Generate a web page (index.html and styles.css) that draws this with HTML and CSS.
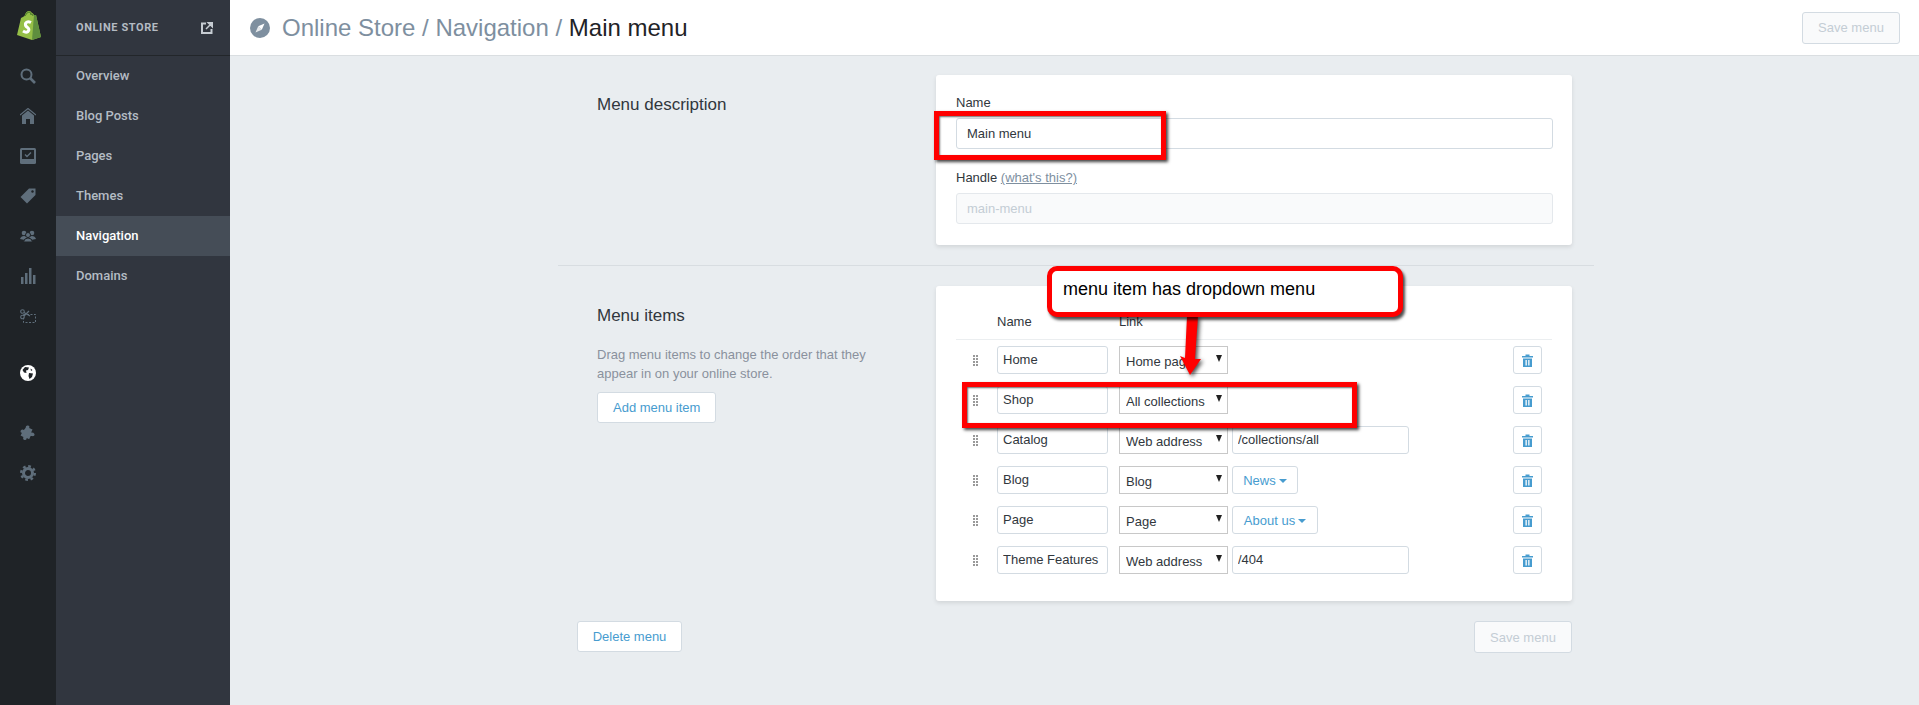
FILE: index.html
```html
<!DOCTYPE html>
<html>
    <head>
        <meta charset="UTF-8">
        <link rel="stylesheet" href="styles.css">
        <title>Main menu</title>
    </head>
    <body>
        <div class="rail">
            <div class="rail-logo">
                <svg width="26" height="30" viewBox="0 0 26 30">
                    <path d="M2 25 L6 8 Q8 7 9.5 6 Q11 1 14 1 Q16 1 17 3 Q18 3 19 5 L21 5 L26 27 L17 30 Z" fill="#95bf47"/>
                    <path d="M19 5 L21 5 L26 27 L17 30 Z" fill="#5e8e3e"/>
                    <path d="M10 6 Q12 2 14 2 Q16 2 16 5 M16 4 Q18 4 18 6" fill="none" stroke="#4a7a2a" stroke-width="1"/>
                    <path d="M16 12.5 Q12 10.500 10.500 13.500 Q10 16 12.500 17.500 Q15 19.500 13 21.500 Q11 23 8 21" fill="none" stroke="#fff" stroke-width="3"/>
                </svg>
            </div>
            <div class="rail-icon">
                <svg width="16" height="16" viewBox="0 0 16 16"><circle cx="6.500" cy="6.500" r="5" fill="none" stroke="#5f6e7b" stroke-width="2"/><path d="M10 10 L15 15" stroke="#5f6e7b" stroke-width="2.600"/></svg>
            </div>
            <div class="rail-icon">
                <svg width="16" height="16" viewBox="0 0 16 16"><path d="M0 7 L8 0.500 L16 7" fill="none" stroke="#5f6e7b" stroke-width="1.200"/><path d="M8 2.500 L14 7.500 V16 H10 V11 H6 V16 H2 V7.500 Z" fill="#5f6e7b"/></svg>
            </div>
            <div class="rail-icon">
                <svg width="16" height="16" viewBox="0 0 16 16"><rect width="16" height="16" rx="1.500" fill="#5f6e7b"/><rect x="2" y="2" width="12" height="9" fill="#1f2327"/><path d="M5 6.500 L7 8.500 L11 4.500" fill="none" stroke="#5f6e7b" stroke-width="1.400"/></svg>
            </div>
            <div class="rail-icon">
                <svg width="16" height="16" viewBox="0 0 16 16"><path d="M9 0.500 H15.500 V7 L7 15.500 L0.500 9 Z" fill="#5f6e7b"/><circle cx="12.500" cy="3.500" r="1.200" fill="#1f2327"/></svg>
            </div>
            <div class="rail-icon">
                <svg width="16" height="16" viewBox="0 0 16 16"><circle cx="4" cy="5" r="2.300" fill="#5f6e7b"/><circle cx="12" cy="5" r="2.300" fill="#5f6e7b"/><path d="M0 11 Q1 8 4 8 Q7 8 8 11 Q9 8 12 8 Q15 8 16 11 L11 12 H5 Z" fill="#5f6e7b"/><circle cx="8" cy="7" r="2.500" fill="#5f6e7b" stroke="#1f2327"/><path d="M3.500 14 Q4 10 8 10 Q12 10 12.500 14 Z" fill="#5f6e7b" stroke="#1f2327"/></svg>
            </div>
            <div class="rail-icon">
                <svg width="16" height="16" viewBox="0 0 16 16"><path d="M1 9 H3.500 V16 H1 Z M5 5 H7.500 V16 H5 Z M9 0 H11.500 V16 H9 Z M13 7 H15.500 V16 H13 Z" fill="#5f6e7b"/></svg>
            </div>
            <div class="rail-icon">
                <svg width="16" height="14" viewBox="0 0 16 14"><circle cx="2.500" cy="2.500" r="1.800" fill="none" stroke="#5f6e7b" stroke-width="1.100"/><circle cx="2.500" cy="8" r="1.800" fill="none" stroke="#5f6e7b" stroke-width="1.100"/><path d="M4 3.500 L10 7 M4 7 L9 2" stroke="#5f6e7b" stroke-width="1.200"/><rect x="3.500" y="5.500" width="12" height="8" fill="none" stroke="#5f6e7b" stroke-dasharray="2 1.500"/></svg>
            </div>
            <div class="rail-icon rail-gap">
                <svg width="16" height="16" viewBox="0 0 16 16"><circle cx="8" cy="8" r="8" fill="#fff"/><path d="M5 2 L9 2.500 L8 5 L6 5.500 L6.500 8 L4 7.500 L2.500 5 Z M9 8 L13 8.500 L12 12 L9.500 14 L8.500 11 Z M10.500 3.500 L12.500 5 L11 6 Z" fill="#1f2327"/></svg>
            </div>
            <div class="rail-icon rail-gap-small">
                <svg width="16" height="16" viewBox="0 0 16 16"><path d="M5 3 Q4.500 0.500 7 0.500 Q9 0.500 8.500 3 L12 4 L11 7 Q13.500 6.500 14.500 8 Q15.500 10.500 12.500 10.500 L11 10.500 L10 14 L7.500 13 Q7.500 15.500 5.500 15.500 Q3.500 15.500 4 12.500 L1 11.500 L2 8.500 Q0 9 0.500 6.500 Q1.500 5 3.500 5.500 Z" fill="#5f6e7b" transform="rotate(8 8 8)"/></svg>
            </div>
            <div class="rail-icon">
                <svg width="16" height="16" viewBox="0 0 16 16"><circle cx="8" cy="8" r="4.500" fill="none" stroke="#5f6e7b" stroke-width="3"/><circle cx="8" cy="8" r="6.800" fill="none" stroke="#5f6e7b" stroke-width="2.400" stroke-dasharray="2.700 2.640"/></svg>
            </div>
        </div>

        <div class="nav">
            <div class="nav-head">
                <span>ONLINE STORE</span>
                <svg width="12" height="12" viewBox="0 0 12 12"><path d="M5 1.500 H1 V11 H10.500 V7" fill="none" stroke="#c6ccd2" stroke-width="2"/><path d="M7 0.500 H11.500 V5 Z M9.500 2.500 L5 7" fill="#c6ccd2" stroke="#c6ccd2" stroke-width="1.500"/></svg>
            </div>
            <a class="nav-item">Overview</a>
            <a class="nav-item">Blog Posts</a>
            <a class="nav-item">Pages</a>
            <a class="nav-item">Themes</a>
            <a class="nav-item active">Navigation</a>
            <a class="nav-item">Domains</a>
        </div>

        <div class="main">
            <div class="topbar">
                <svg width="20" height="20" viewBox="0 0 20 20"><circle cx="10" cy="10" r="10" fill="#7e8f9f"/><path d="M14.500 5.500 L11.800 11.800 L8.200 8.200 Z" fill="#fff"/><path d="M5.500 14.500 L8.200 8.200 L11.800 11.800 Z" fill="#fff" opacity=".8"/></svg>
                <h1 class="crumbs">Online Store / Navigation / <span>Main menu</span></h1>
                <button class="btn btn-disabled top-save">Save menu</button>
            </div>

            <div class="content">
                <div class="section">
                    <div class="section-info">
                        <h2>Menu description</h2>
                    </div>
                    <div class="card card-form">
                        <label class="field-label">Name</label>
                        <input class="text-input wide" value="Main menu">
                        <label class="field-label">Handle <a class="help-link">(what's this?)</a></label>
                        <input class="text-input wide locked" value="main-menu" disabled>
                    </div>
                </div>

                <div class="divider"></div>

                <div class="section">
                    <div class="section-info">
                        <h2>Menu items</h2>
                        <p>Drag menu items to change the order that they appear in on your online store.</p>
                        <button class="btn">Add menu item</button>
                    </div>
                    <div class="card card-items">
                        <div class="items-head">
                            <span class="col-name">Name</span>
                            <span>Link</span>
                        </div>

                        <div class="item">
                            <span class="grip"></span>
                            <input class="text-input name-input" value="Home">
                            <div class="select-wrap"><select><option>Home page</option></select></div>
                            <button class="trash"><svg width="11" height="13" viewBox="0 0 11 13"><path d="M0 2 H3.500 V0.500 H7.500 V2 H11 V3.500 H0 Z M1 4.500 H10 V13 H1 Z M3.500 6 V11.500 H4.800 V6 Z M6.200 6 V11.500 H7.500 V6 Z" fill="#479ccf" fill-rule="evenodd"/></svg></button>
                        </div>
                        <div class="item">
                            <span class="grip"></span>
                            <input class="text-input name-input" value="Shop">
                            <div class="select-wrap"><select><option>All collections</option></select></div>
                            <button class="trash"><svg width="11" height="13" viewBox="0 0 11 13"><path d="M0 2 H3.500 V0.500 H7.500 V2 H11 V3.500 H0 Z M1 4.500 H10 V13 H1 Z M3.500 6 V11.500 H4.800 V6 Z M6.200 6 V11.500 H7.500 V6 Z" fill="#479ccf" fill-rule="evenodd"/></svg></button>
                        </div>
                        <div class="item">
                            <span class="grip"></span>
                            <input class="text-input name-input" value="Catalog">
                            <div class="select-wrap"><select><option>Web address</option></select></div>
                            <input class="text-input url-input" value="/collections/all">
                            <button class="trash"><svg width="11" height="13" viewBox="0 0 11 13"><path d="M0 2 H3.500 V0.500 H7.500 V2 H11 V3.500 H0 Z M1 4.500 H10 V13 H1 Z M3.500 6 V11.500 H4.800 V6 Z M6.200 6 V11.500 H7.500 V6 Z" fill="#479ccf" fill-rule="evenodd"/></svg></button>
                        </div>
                        <div class="item">
                            <span class="grip"></span>
                            <input class="text-input name-input" value="Blog">
                            <div class="select-wrap"><select><option>Blog</option></select></div>
                            <button class="picker picker-news">News<i class="caret"></i></button>
                            <button class="trash"><svg width="11" height="13" viewBox="0 0 11 13"><path d="M0 2 H3.500 V0.500 H7.500 V2 H11 V3.500 H0 Z M1 4.500 H10 V13 H1 Z M3.500 6 V11.500 H4.800 V6 Z M6.200 6 V11.500 H7.500 V6 Z" fill="#479ccf" fill-rule="evenodd"/></svg></button>
                        </div>
                        <div class="item">
                            <span class="grip"></span>
                            <input class="text-input name-input" value="Page">
                            <div class="select-wrap"><select><option>Page</option></select></div>
                            <button class="picker picker-about">About us<i class="caret"></i></button>
                            <button class="trash"><svg width="11" height="13" viewBox="0 0 11 13"><path d="M0 2 H3.500 V0.500 H7.500 V2 H11 V3.500 H0 Z M1 4.500 H10 V13 H1 Z M3.500 6 V11.500 H4.800 V6 Z M6.200 6 V11.500 H7.500 V6 Z" fill="#479ccf" fill-rule="evenodd"/></svg></button>
                        </div>
                        <div class="item">
                            <span class="grip"></span>
                            <input class="text-input name-input" value="Theme Features">
                            <div class="select-wrap"><select><option>Web address</option></select></div>
                            <input class="text-input url-input" value="/404">
                            <button class="trash"><svg width="11" height="13" viewBox="0 0 11 13"><path d="M0 2 H3.500 V0.500 H7.500 V2 H11 V3.500 H0 Z M1 4.500 H10 V13 H1 Z M3.500 6 V11.500 H4.800 V6 Z M6.200 6 V11.500 H7.500 V6 Z" fill="#479ccf" fill-rule="evenodd"/></svg></button>
                        </div>
                    </div>
                </div>

                <div class="page-actions">
                    <button class="btn btn-delete">Delete menu</button>
                    <button class="btn btn-disabled btn-save">Save menu</button>
                </div>
            </div>
        </div>

        <!-- red annotations pasted over the screenshot -->
        <div class="mark mark-name"></div>
        <div class="mark mark-shop"></div>
        <svg class="mark-arrow" width="32" height="64" viewBox="0 0 32 64"><path d="M12 0 H23 L20 43 H26 L15 59 L5 40 L10 42 Z" fill="#f00"/></svg>
        <div class="callout">menu item has dropdown menu</div>
    </body>
</html>
```

FILE: styles.css
```css
html, body {
    height: 100%;
    margin: 0;
}
body {
    display: flex;
    position: relative;
    overflow: hidden;
    background: #e9edf0;
    color: #31373d;
    font-family: "Liberation Sans", Arial, sans-serif;
    font-size: 14px;
}
svg {
    display: block;
}

/* left icon rail */
.rail {
    width: 56px;
    flex: none;
    background: #1f2327;
}
.rail-logo {
    height: 56px;
    padding: 10px 0 0 15px;
    box-sizing: border-box;
}
.rail-icon {
    height: 40px;
    display: flex;
    align-items: center;
    justify-content: center;
}
.rail-gap {
    margin-top: 17px;
}
.rail-gap-small {
    margin-top: 20px;
}

/* online store nav */
.nav {
    width: 174px;
    flex: none;
    background: #31363f;
    font-family: Roboto, sans-serif;
}
.nav-head {
    height: 55px;
    border-bottom: 1px solid #22262a;
    display: flex;
    align-items: center;
    justify-content: space-between;
    padding: 0 17px 0 20px;
    color: #b4bbc3;
    font-size: 11px;
    font-weight: 700;
    letter-spacing: 0.6px;
}
.nav-item {
    display: block;
    height: 40px;
    line-height: 40px;
    padding-left: 20px;
    color: #b4bcc4;
    font-size: 13px;
    font-weight: 500;
}
.nav-item.active {
    background: #454d57;
    color: #fff;
}

/* main */
.main {
    flex: 1;
    min-width: 0;
}
.topbar {
    height: 55px;
    background: #fff;
    border-bottom: 1px solid #dadee1;
    display: flex;
    align-items: center;
    padding: 0 19px 0 20px;
}
.crumbs {
    margin: 0 0 0 12px;
    font-size: 24px;
    font-weight: 400;
    color: #7e8f9f;
}
.crumbs span {
    color: #1f2327;
}
.top-save {
    margin-left: auto;
}
.content {
    width: 1036px;
    margin: 19px 0 0 328px;
}
.section {
    display: flex;
    padding-left: 19px;
}
.section-info {
    width: 359px;
    flex: none;
    box-sizing: border-box;
    padding: 20px 40px 0 20px;
}
.section-info h2 {
    margin: 0;
    font-size: 17px;
    line-height: 20px;
    font-weight: 400;
    color: #31373d;
}
.section-info p {
    margin: 20px 0 9px;
    font-size: 13px;
    line-height: 18.500px;
    color: #8a919d;
}
.card {
    width: 636px;
    flex: none;
    box-sizing: border-box;
    background: #fff;
    border-radius: 3px;
    box-shadow: 0 2px 4px rgba(0, 0, 0, 0.1);
}
.card-form {
    height: 170px;
    padding: 19px 20px 0;
}
.field-label {
    display: block;
    height: 18px;
    line-height: 18px;
    margin-bottom: 6px;
    font-size: 13px;
    color: #31373d;
}
.help-link {
    color: #7e8f9f;
    text-decoration: underline;
}
.text-input {
    box-sizing: border-box;
    height: 28px;
    padding: 0 5px 2px;
    border: 1px solid #d3dbe2;
    border-radius: 3px;
    background: #fff;
    color: #31373d;
    font-family: inherit;
    font-size: 13px;
}
.wide {
    display: block;
    width: 597px;
    height: 31px;
    padding: 0 10px;
    margin-bottom: 20px;
}
.locked {
    background: #f9fafb;
    border-color: #e4e8ec;
    color: #c4cdd5;
}
.divider {
    height: 1px;
    margin: 20px 0;
    background: #d8dde1;
}

/* menu items table */
.card-items {
    height: 315px;
    padding: 27px 20px 0;
}
.items-head {
    height: 26px;
    padding-left: 41px;
    display: flex;
    border-bottom: 1px solid #ebeef0;
    font-size: 13px;
    line-height: 18px;
    margin-bottom: 6px;
}
.col-name {
    width: 122px;
}
.item {
    display: flex;
    align-items: center;
    height: 28px;
    margin-bottom: 12px;
}
.grip {
    width: 6px;
    height: 11px;
    margin: 0 18px 0 17px;
    background-image: radial-gradient(circle at 1px 1px, #999 1px, transparent 1.200px);
    background-size: 3px 3px;
}
.name-input {
    width: 111px;
    margin-right: 11px;
}
.select-wrap {
    position: relative;
    width: 109px;
    height: 28px;
    margin-right: 4px;
}
.select-wrap::after {
    content: "";
    position: absolute;
    right: 6px;
    top: 9px;
    border-left: 3.500px solid transparent;
    border-right: 3.500px solid transparent;
    border-top: 7px solid #222;
}
.select-wrap select {
    appearance: none;
    display: block;
    box-sizing: border-box;
    width: 109px;
    height: 28px;
    padding: 2px 6px 0;
    border: 1px solid #c8c8c8;
    background: #fff;
    color: #31373d;
    font-family: inherit;
    font-size: 13px;
}
.url-input {
    width: 177px;
}
.picker {
    box-sizing: border-box;
    height: 28px;
    padding: 0;
    border: 1px solid #d3dbe2;
    border-radius: 3px;
    background: #fff;
    color: #479ccf;
    font-family: inherit;
    font-size: 13px;
}
.picker-news {
    width: 66px;
}
.picker-about {
    width: 86px;
}
.caret {
    display: inline-block;
    margin-left: 3px;
    vertical-align: 2px;
    border-left: 4px solid transparent;
    border-right: 4px solid transparent;
    border-top: 4px solid #479ccf;
}
.trash {
    width: 29px;
    height: 28px;
    margin: 0 10px 0 auto;
    padding: 0;
    display: flex;
    align-items: center;
    justify-content: center;
    background: #fff;
    border: 1px solid #d3dbe2;
    border-radius: 3px;
}

/* buttons */
.btn {
    box-sizing: border-box;
    height: 31px;
    padding: 0 15px;
    border: 1px solid #d3dbe2;
    border-radius: 3px;
    background: #fff;
    color: #479ccf;
    font-family: inherit;
    font-size: 13px;
}
.btn-disabled {
    width: 98px;
    height: 32px;
    padding: 0;
    background: #f9fafb;
    border-color: #d3dbe2;
    color: #c4cdd5;
}
.page-actions {
    display: flex;
    justify-content: space-between;
    width: 995px;
    margin: 20px 0 0 19px;
}
.btn-delete {
    width: 105px;
    padding: 0;
}

/* annotations */
.mark {
    position: absolute;
    box-sizing: border-box;
    border: 5px solid #f00;
    box-shadow: 2px 2px 3px rgba(0, 0, 0, 0.75), inset 1px 1px 2px rgba(0, 0, 0, 0.6);
}
.mark-name {
    left: 934px;
    top: 111px;
    width: 232px;
    height: 49px;
}
.mark-shop {
    left: 962px;
    top: 382px;
    width: 395px;
    height: 46px;
}
.mark-arrow {
    position: absolute;
    left: 1175px;
    top: 316px;
    filter: drop-shadow(2px 2px 2px rgba(0, 0, 0, 0.7));
}
.callout {
    position: absolute;
    left: 1047px;
    top: 266px;
    width: 356px;
    height: 51px;
    box-sizing: border-box;
    padding: 6px 0 0 11px;
    border: 5px solid #f00;
    border-radius: 10px;
    background: #fff;
    box-shadow: 2px 3px 3px rgba(0, 0, 0, 0.7);
    color: #000;
    font-size: 18px;
    line-height: 24px;
}
```
